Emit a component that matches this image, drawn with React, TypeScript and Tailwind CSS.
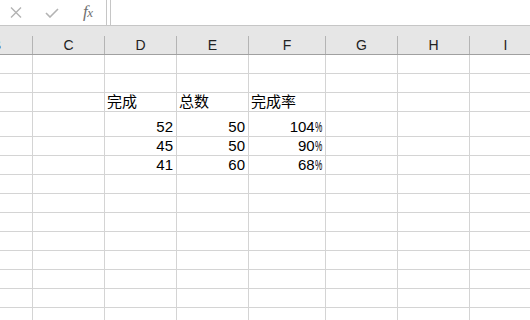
import React from "react";

const cols: { key: string; w: string }[] = [
  { key: "B", w: "w-[72px] ml-[-39px]" },
  { key: "C", w: "w-[72px]" },
  { key: "D", w: "w-[72px]" },
  { key: "E", w: "w-[72px]" },
  { key: "F", w: "w-[77px]" },
  { key: "G", w: "w-[72px]" },
  { key: "H", w: "w-[72px]" },
  { key: "I", w: "w-[72px]" },
];

type Cell = { text: React.ReactNode; align: "left" | "right" };

const Pct = ({ n }: { n: string }) => (
  <span>
    {n}
    <span className="inline-block origin-left scale-x-[0.55] mr-[-6px]">%</span>
  </span>
);

const rows: { h: string; cells: Record<string, Cell> }[] = [
  { h: "h-[19px]", cells: {} },
  { h: "h-[19px]", cells: {} },
  {
    h: "h-[19px]",
    cells: {
      D: { text: "完成", align: "left" },
      E: { text: "总数", align: "left" },
      F: { text: "完成率", align: "left" },
    },
  },
  {
    h: "h-[25px]",
    cells: {
      D: { text: "52", align: "right" },
      E: { text: "50", align: "right" },
      F: { text: <Pct n="104" />, align: "right" },
    },
  },
  {
    h: "h-[19px]",
    cells: {
      D: { text: "45", align: "right" },
      E: { text: "50", align: "right" },
      F: { text: <Pct n="90" />, align: "right" },
    },
  },
  {
    h: "h-[19px]",
    cells: {
      D: { text: "41", align: "right" },
      E: { text: "60", align: "right" },
      F: { text: <Pct n="68" />, align: "right" },
    },
  },
  ...Array.from({ length: 8 }, () => ({ h: "h-[19px]", cells: {} })),
];

export default function App() {
  return (
    <div className="w-[530px] h-[320px] overflow-hidden bg-white font-['Liberation_Sans','Noto_Sans_CJK_SC',sans-serif] text-black">
      {/* Formula bar */}
      <div className="flex h-[26px] border-b border-[#c6c6c6] bg-white">
        <div className="relative w-[107px] h-full border-r border-[#c6c6c6]">
          <svg className="absolute left-[10px] top-[7px]" width="12" height="11" viewBox="0 0 12 11">
            <path d="M1 0.5 L11 10.5 M11 0.5 L1 10.5" stroke="#b3b3b3" strokeWidth="1.4" fill="none" />
          </svg>
          <svg className="absolute left-[45px] top-[8px]" width="14" height="10" viewBox="0 0 14 10">
            <path d="M1 5 L5 9 L13 1" stroke="#b3b3b3" strokeWidth="1.6" fill="none" />
          </svg>
          <span className="absolute left-[83px] top-[3px] text-[17px] italic text-[#707070] font-['Liberation_Serif',serif] leading-[18px] tracking-[-0.5px]">
            f<span className="text-[13px]">x</span>
          </span>
        </div>
        <div className="w-[3px]" />
        <div className="flex-1 h-full border-l border-[#c6c6c6]" />
      </div>
      {/* Gray band */}
      <div className="h-[10px] bg-[#e6e6e6]" />
      {/* Column header */}
      <div className="flex h-[19px] bg-[#e6e6e6] border-b border-[#a0a0a0]">
        {cols.map((c) => (
          <div
            key={c.key}
            className={`${c.w} shrink-0 h-full border-r border-[#b4b4b4] flex items-center justify-center text-[14px] leading-none text-[#222]`}
          >
            {c.key}
          </div>
        ))}
      </div>
      {/* Rows */}
      {rows.map((r, i) => (
        <div key={i} className={`flex ${r.h} border-b border-[#d4d4d4]`}>
          {cols.map((c) => {
            const cell = r.cells[c.key];
            return (
              <div
                key={c.key}
                className={`${c.w} shrink-0 h-full border-r border-[#d4d4d4] flex items-end text-[15px] leading-none pb-[2px] ${
                  cell && cell.align === "right" ? "justify-end pr-[3px]" : "justify-start pl-[2px]"
                }`}
              >
                {cell ? cell.text : null}
              </div>
            );
          })}
        </div>
      ))}
    </div>
  );
}
